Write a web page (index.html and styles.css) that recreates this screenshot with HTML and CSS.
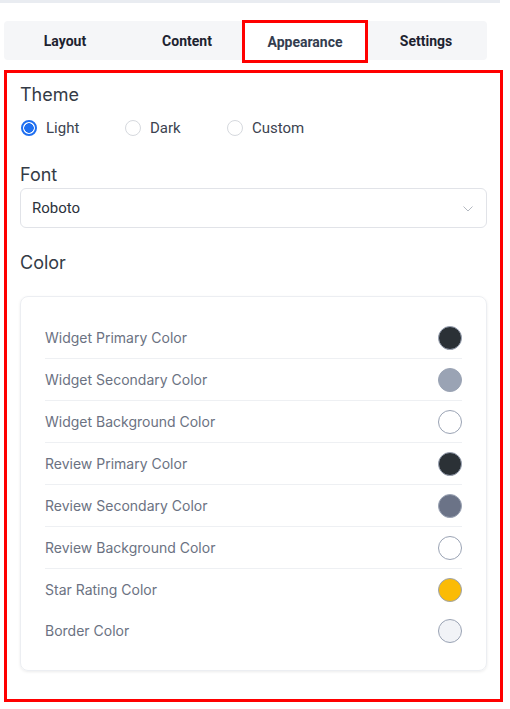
FILE: index.html
```html
<!DOCTYPE html>
<html>
<head>
<meta charset="utf-8">
<link rel="stylesheet" href="styles.css">
</head>
<body>
<div class="topstrip"></div>
<nav class="tabs">
  <div class="tab">Layout</div>
  <div class="tab">Content</div>
  <div class="tab active">Appearance</div>
  <div class="tab">Settings</div>
</nav>
<main class="panel">
  <h2 class="heading">Theme</h2>
  <div class="radios">
    <label class="radio"><span class="dot checked"></span>Light</label>
    <label class="radio"><span class="dot"></span>Dark</label>
    <label class="radio"><span class="dot"></span>Custom</label>
  </div>
  <h2 class="heading font-h">Font</h2>
  <div class="select">
    <span>Roboto</span>
    <svg class="chev" width="10" height="6" viewBox="0 0 10 6"><path d="M0.5 0.5 L5 5 L9.5 0.5" fill="none" stroke="#b4b9c1" stroke-width="1"/></svg>
  </div>
  <h2 class="heading color-h">Color</h2>
  <div class="card">
    <div class="row"><span>Widget Primary Color</span><span class="sw" style="background:#2b3136"></span></div>
    <div class="row"><span>Widget Secondary Color</span><span class="sw" style="background:#9aa3b4"></span></div>
    <div class="row"><span>Widget Background Color</span><span class="sw" style="background:#ffffff"></span></div>
    <div class="row"><span>Review Primary Color</span><span class="sw" style="background:#2b3136"></span></div>
    <div class="row"><span>Review Secondary Color</span><span class="sw" style="background:#6b7387"></span></div>
    <div class="row"><span>Review Background Color</span><span class="sw" style="background:#ffffff"></span></div>
    <div class="row nosep"><span>Star Rating Color</span><span class="sw" style="background:#fbbb05"></span></div>
    <div class="row nosep"><span>Border Color</span><span class="sw" style="background:#f1f3f7"></span></div>
  </div>
</main>
</body>
</html>
```
FILE: styles.css
```css
* { box-sizing: border-box; }
html, body { margin: 0; padding: 0; background: #fff; }
body { font-family: Roboto, "Liberation Sans", sans-serif; width: 510px; }

.topstrip { height: 3px; width: 500px; background: #e9ecf1; }

.tabs {
  display: flex;
  margin: 18px 0 0 4px;
  width: 483px;
  height: 39px;
  background: #f5f6f8;
  border-radius: 4px;
}
.tab {
  flex: 1;
  display: flex;
  align-items: center;
  justify-content: center;
  font-weight: 700;
  font-size: 14px;
  color: #1d2330;
}
.tab.active {
  background: #fff;
  color: #333d4f;
  outline: 3px solid #ff0000;
  outline-offset: -1px;
  margin: 1px -1px -1px -4px;
}

.panel {
  margin: 10px 0 0 4px;
  width: 499px;
  border: 3px solid #ff0000;
  padding: 10px 13px 28px 13px;
}
.heading {
  margin: 0;
  font-family: Inter, Roboto, sans-serif;
  font-weight: 400;
  font-size: 18px;
  line-height: 24px;
  color: #343b46;
}
.radios {
  display: flex;
  margin-top: 9px;
  height: 24px;
  align-items: center;
}
.radio {
  display: flex;
  align-items: center;
  gap: 9px;
  font-size: 15px;
  color: #3c4350;
  margin-left: 1px;
}
.radio:nth-child(1) { width: 103px; }
.radio:nth-child(2) { width: 101px; }
.dot {
  width: 16px;
  height: 16px;
  border-radius: 50%;
  border: 1px solid #d6d9de;
  background: #fff;
}
.dot.checked {
  border: 2px solid #1f6ff0;
  background: radial-gradient(circle, #1f6ff0 0 4.5px, #fff 5px);
}
.font-h { margin-top: 23px; }
.select {
  margin-top: 1px;
  height: 40px;
  border: 1px solid #e1e3e8;
  border-radius: 6px;
  display: flex;
  align-items: center;
  justify-content: space-between;
  padding: 0 13px 0 11px;
  font-size: 15px;
  color: #2c323c;
}
.chev { margin-top: 2px; }
.color-h { margin-top: 23px; }
.card {
  margin-top: 21px;
  border: 1px solid #eceef2;
  border-radius: 8px;
  box-shadow: 0 1px 3px rgba(0,0,0,0.08);
  padding: 20px 24px 19px 24px;
}
.row {
  display: flex;
  align-items: center;
  justify-content: space-between;
  height: 42px;
  border-bottom: 1px solid #eef0f3;
  font-family: Inter, Roboto, sans-serif;
  font-size: 14px;
  color: #6b7282;
}
.row.nosep { border-bottom: none; height: 41px; }
.sw {
  width: 24px;
  height: 24px;
  border-radius: 50%;
  border: 1px solid #9aa3b4;
}
```
